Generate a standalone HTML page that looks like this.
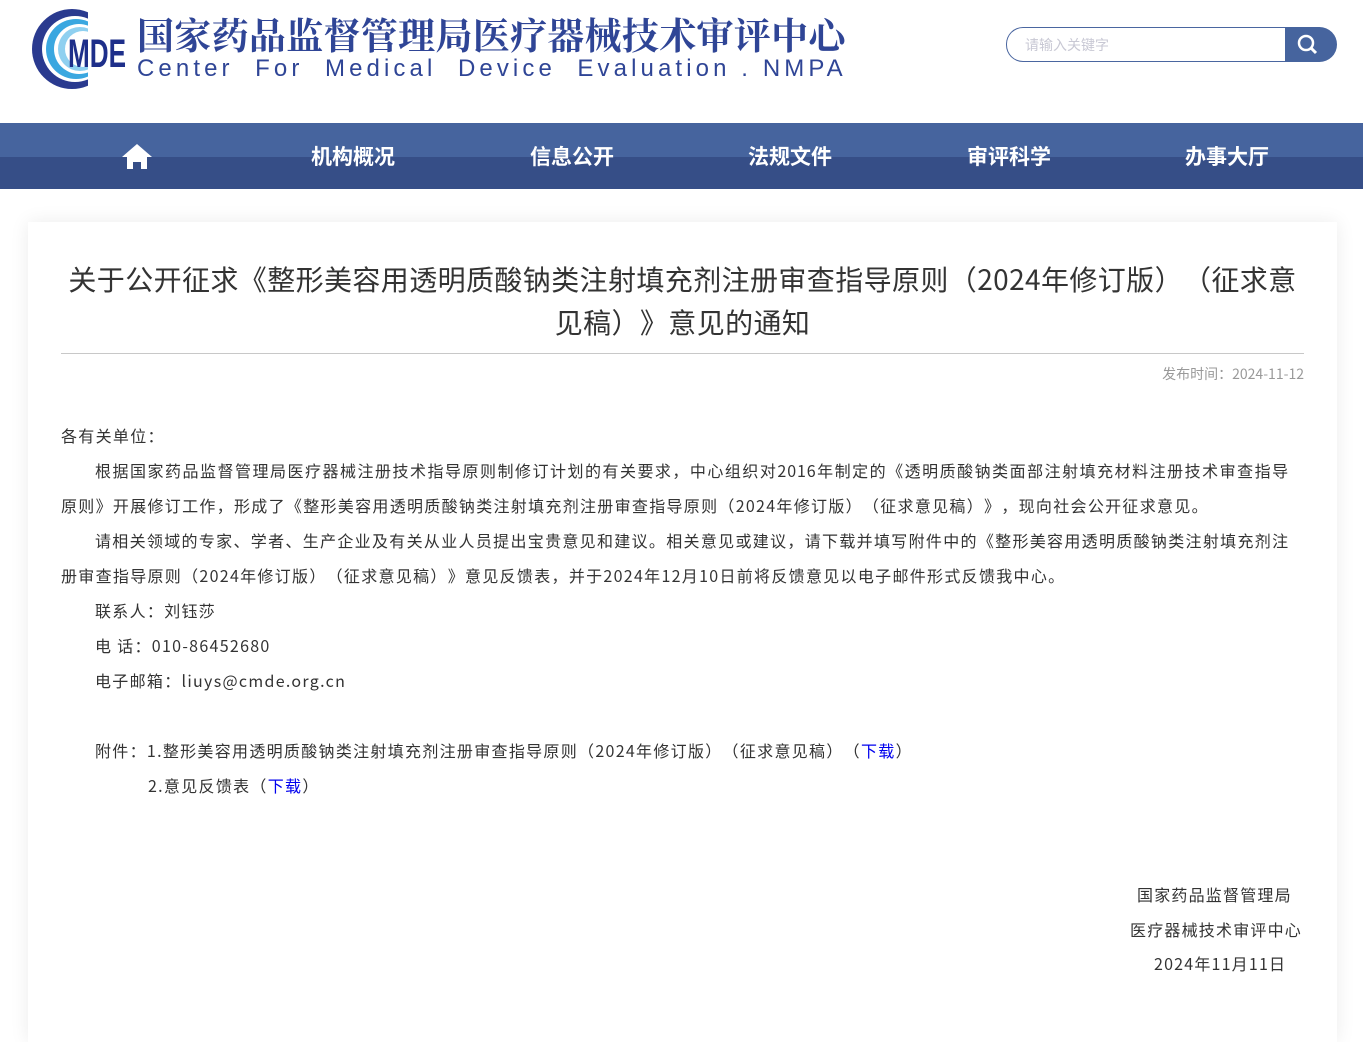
<!DOCTYPE html><html><head><meta charset="utf-8"><style>
body{margin:0;background:#fff;font-family:"Noto Sans CJK SC","Liberation Sans",sans-serif;width:1363px;height:1025px;overflow:hidden;position:relative;text-spacing-trim:space-all}
.hd{position:absolute;left:0;top:0;width:1363px;height:123px}
.t1{position:absolute;left:137px;top:8px;font-family:"Noto Serif CJK SC",serif;font-weight:bold;font-size:37px;line-height:50px;color:#2f4596;white-space:nowrap;letter-spacing:0.3px}
.t2{position:absolute;left:137px;top:55px;font-family:"Liberation Sans",sans-serif;font-size:24px;color:#2f4596;letter-spacing:4.1px;white-space:nowrap}
.srch{position:absolute;left:1006px;top:27px;width:278px;height:33px;border:1px solid #4a66a0;border-radius:17px 0 0 17px;border-right:none}
.srch span{position:absolute;left:18px;top:7px;font-size:14px;line-height:20px;color:#c8c8d4}
.sb{position:absolute;left:1285px;top:27px;width:52px;height:35px;background:#46649e;border-radius:0 18px 18px 0}
.nav{position:absolute;left:0;top:123px;width:1363px;height:66px;background:linear-gradient(#46649e 0,#46649e 34px,#364e87 34px)}
.nav b{position:absolute;top:18px;font-size:21px;line-height:30px;color:#fff}
.card{position:absolute;left:28px;top:222px;width:1309px;height:820px;background:#fff;box-shadow:0 0 18px rgba(0,0,0,.08)}
h1{position:absolute;left:33px;top:36px;width:1243px;margin:0;text-align:center;font-weight:normal;font-size:28px;line-height:43px;color:#333;letter-spacing:0.4px}
.hr{position:absolute;left:33px;top:131px;width:1243px;height:1px;background:#c8c8c8}
.dt{position:absolute;right:33px;top:142px;font-size:14px;line-height:20px;color:#999}
.bd{position:absolute;left:33px;top:196px;width:1290px;font-size:16px;line-height:35px;color:#333;letter-spacing:1.3px;white-space:nowrap}
.bd p{margin:0}
.i{text-indent:34px}
.j{width:1228px;white-space:normal;text-align:justify;text-align-last:justify;letter-spacing:0.9px}
a{color:#0000ee;text-decoration:none}
.r{position:absolute;font-size:16px;line-height:24px;color:#333;letter-spacing:1.2px}
</style></head><body>
<div class="hd">
<svg style="position:absolute;left:28px;top:7px" width="100" height="84" viewBox="0 0 100 84">
<circle cx="44" cy="42" r="40" fill="#2a3a8f"/>
<circle cx="47" cy="42" r="33" fill="#fff"/>
<circle cx="48" cy="42" r="30" fill="#3aa7e0"/>
<circle cx="51" cy="42" r="25" fill="#fff"/>
<circle cx="52" cy="42" r="22" fill="#8fd0f0"/>
<circle cx="55" cy="42" r="18" fill="#fff"/>
<rect x="60" y="0" width="40" height="84" fill="#fff"/>
<text x="40" y="60" font-family="Liberation Sans" font-weight="bold" font-size="40" fill="#1e2f8a" textLength="58" lengthAdjust="spacingAndGlyphs">MDE</text>
</svg>
<div class="t1">国家药品监督管理局医疗器械技术审评中心</div>
<div class="t2">Center &nbsp;For &nbsp;Medical &nbsp;Device &nbsp;Evaluation . NMPA</div>
<div class="srch"><span>请输入关键字</span></div>
<div class="sb"><svg width="52" height="35"><circle cx="21" cy="16" r="7" fill="none" stroke="#fff" stroke-width="2.5"/><line x1="26" y1="21" x2="31" y2="26" stroke="#fff" stroke-width="3"/></svg></div>
</div>
<div class="nav">
<svg style="position:absolute;left:122px;top:20px" width="30" height="27"><path d="M15 1L0 14h5v12h6v-7h8v7h6V14h5z" fill="#fff"/></svg>
<b style="left:311px">机构概况</b><b style="left:530px">信息公开</b><b style="left:748px">法规文件</b><b style="left:967px">审评科学</b><b style="left:1185px">办事大厅</b>
</div>
<div class="card">
<h1>关于公开征求《整形美容用透明质酸钠类注射填充剂注册审查指导原则（2024年修订版）（征求意见稿）》意见的通知</h1>
<div class="hr"></div>
<div class="dt">发布时间：2024-11-12</div>
<div class="bd">
<p>各有关单位：</p>
<p class="i j">根据国家药品监督管理局医疗器械注册技术指导原则制修订计划的有关要求，中心组织对2016年制定的《透明质酸钠类面部注射填充材料注册技术审查指导</p>
<p>原则》开展修订工作，形成了《整形美容用透明质酸钠类注射填充剂注册审查指导原则（2024年修订版）（征求意见稿）》，现向社会公开征求意见。</p>
<p class="i j">请相关领域的专家、学者、生产企业及有关从业人员提出宝贵意见和建议。相关意见或建议，请下载并填写附件中的《整形美容用透明质酸钠类注射填充剂注</p>
<p>册审查指导原则（2024年修订版）（征求意见稿）》意见反馈表，并于2024年12月10日前将反馈意见以电子邮件形式反馈我中心。</p>
<p class="i">联系人：刘钰莎</p>
<p class="i">电 话：010-86452680</p>
<p class="i">电子邮箱：liuys@cmde.org.cn</p>
<p>&nbsp;</p>
<p class="i">附件：1.整形美容用透明质酸钠类注射填充剂注册审查指导原则（2024年修订版）（征求意见稿）（<a>下载</a>）</p>
<p style="padding-left:87px">2.意见反馈表（<a>下载</a>）</p>
</div>
<div class="r" style="left:1109px;top:660px">国家药品监督管理局</div>
<div class="r" style="left:1102px;top:695px">医疗器械技术审评中心</div>
<div class="r" style="left:1126px;top:729px">2024年11月11日</div>
</div>
</body></html>
